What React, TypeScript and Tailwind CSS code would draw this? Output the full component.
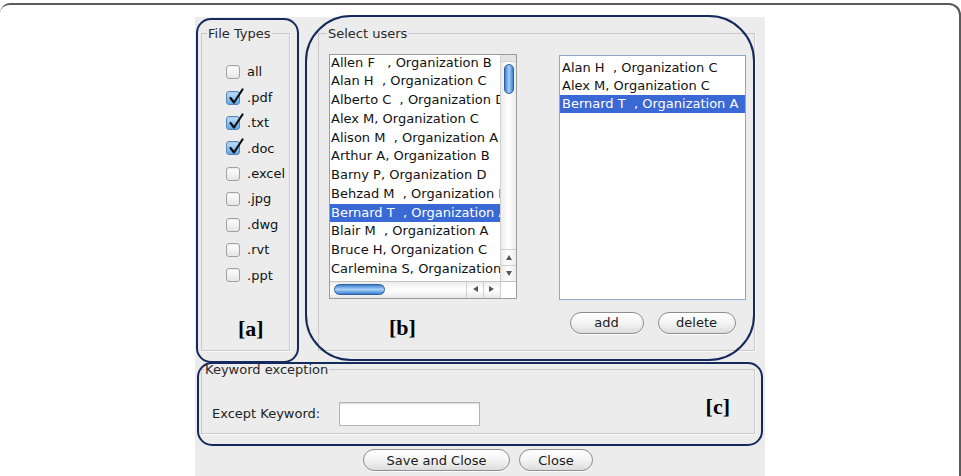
import React from 'react';

const fileTypes = [
  { label: 'all', on: false },
  { label: '.pdf', on: true },
  { label: '.txt', on: true },
  { label: '.doc', on: true },
  { label: '.excel', on: false },
  { label: '.jpg', on: false },
  { label: '.dwg', on: false },
  { label: '.rvt', on: false },
  { label: '.ppt', on: false },
];

const users = [
  'Allen F   , Organization B',
  'Alan H  , Organization C',
  'Alberto C  , Organization D',
  'Alex M, Organization C',
  'Alison M  , Organization A',
  'Arthur A, Organization B',
  'Barny P, Organization D',
  'Behzad M  , Organization D',
  'Bernard T  , Organization A',
  'Blair M  , Organization A',
  'Bruce H, Organization C',
  'Carlemina S, Organization D',
  'Carol K, Organization B',
];

const picked = ['Alan H  , Organization C', 'Alex M, Organization C', 'Bernard T  , Organization A'];

function Check({ on }: { on: boolean }) {
  return (
    <span
      className={
        'relative inline-block w-[14px] h-[14px] rounded-[3px] border shadow-[inset_0_1px_1px_rgba(0,0,0,0.08)] ' +
        (on
          ? 'border-[#5a86b6] bg-gradient-to-b from-[#bfe0fb] to-[#5ea9e8]'
          : 'border-[#a2a2a2] bg-gradient-to-b from-white to-[#e6e6e6]')
      }
    >
      {on && (
        <svg className="absolute left-[1px] -top-[4px]" width="16" height="17" viewBox="0 0 16 17">
          <path d="M2.5 10 L6 14.5 L14.5 1.5" fill="none" stroke="#111" strokeWidth="2.2" strokeLinecap="round" strokeLinejoin="round" />
        </svg>
      )}
    </span>
  );
}

function AquaButton({ children, w }: { children: React.ReactNode; w: string }) {
  return (
    <button
      className={
        w +
        ' h-[22px] rounded-full border border-[#8e8e8e] bg-gradient-to-b from-white via-[#f4f4f4] to-[#dcdcdc] text-[13px] text-[#1a1a1a] leading-none shadow-[0_1px_0_rgba(255,255,255,0.8)]'
      }
    >
      {children}
    </button>
  );
}

function Arrow({ dir }: { dir: 'up' | 'down' | 'left' | 'right' }) {
  const pts = {
    up: '3,1 6,6 0,6',
    down: '0,1 6,1 3,6',
    left: '6,0 6,6 1,3',
    right: '0,0 0,6 5,3',
  }[dir];
  return (
    <svg width="6" height="7" viewBox="0 0 6 7">
      <polygon points={pts} fill="#555" />
    </svg>
  );
}

function UserList() {
  return (
    <div className="w-[188px] h-[245px] border border-[#9c9c9c] bg-white flex flex-col">
      <div className="flex flex-1 min-h-0">
        <div className="flex-1 overflow-hidden">
          <div className="-mt-[1px]">
            {users.map((u, i) => (
              <div
                key={u}
                className={
                  'h-[18.75px] leading-[18.75px] pl-[1px] whitespace-pre overflow-hidden ' +
                  (i === 8 ? 'bg-[#3a68d5] text-white' : 'text-[#111]')
                }
              >
                {u}
              </div>
            ))}
          </div>
        </div>
        {/* vertical scrollbar */}
        <div className="w-[16px] border-l border-[#d0d0d0] bg-gradient-to-r from-[#ececec] via-white to-[#ececec] flex flex-col items-center">
          <div className="w-full h-[7px] bg-[#e4e4e4] border-b border-[#cfcfcf]" />
          <div className="mt-[2px] w-[10px] h-[30px] rounded-full border border-[#2c5f9c] bg-gradient-to-r from-[#3b7fd0] via-[#a9d2f7] to-[#3b7fd0]" />
          <div className="flex-1" />
          <div className="w-full h-[16px] border-t border-[#cfcfcf] flex items-center justify-center">
            <Arrow dir="up" />
          </div>
          <div className="w-full h-[16px] border-t border-[#cfcfcf] flex items-center justify-center">
            <Arrow dir="down" />
          </div>
        </div>
      </div>
      {/* horizontal scrollbar */}
      <div className="h-[17px] flex border-t border-[#c4c4c4]">
        <div className="flex-1 bg-gradient-to-b from-[#ececec] via-white to-[#e8e8e8] flex items-center pl-[4px]">
          <div className="w-[51px] h-[11px] rounded-full border border-[#2c5f9c] bg-gradient-to-b from-[#3b7fd0] via-[#a9d2f7] to-[#3b7fd0]" />
          <div className="flex-1" />
          <div className="w-[17px] h-full border-l border-[#cfcfcf] flex items-center justify-center">
            <Arrow dir="left" />
          </div>
          <div className="w-[17px] h-full border-l border-[#cfcfcf] flex items-center justify-center">
            <Arrow dir="right" />
          </div>
        </div>
        <div className="w-[16px] border-l border-[#cfcfcf] bg-white" />
      </div>
    </div>
  );
}

export default function App() {
  return (
    <div className="w-[961px] h-[476px] bg-white overflow-hidden font-['DejaVu_Sans',sans-serif] text-[13px] text-[#111]">
      <div className="mt-[3px] h-[480px] border-t-2 border-r-2 border-[#5a5a5a] rounded-tr-[12px] rounded-tl-[10px]">
        <div className="relative ml-[195px] mt-[12px] w-[570px] h-[470px] bg-[#ececec] pl-[6px] pr-[10px] pt-[7px]">
          <div className="flex gap-[28px]">
            <fieldset className="w-[89px] h-[327px] border border-[#c9c9c9] shadow-[1px_1px_0_#fafafa]">
              <legend className="ml-[5px] px-[1px] text-[#2a2a2a]">File Types</legend>
              <div className="pl-[24px] pt-[16px]">
                {fileTypes.map((f) => (
                  <div key={f.label} className="h-[25.4px] flex items-center gap-[7px]">
                    <Check on={f.on} />
                    <span>{f.label}</span>
                  </div>
                ))}
              </div>
              <div className="mt-[29px] pl-[36px] font-['Liberation_Serif',serif] font-bold text-[22px] leading-[24px] text-black">
                [a]
              </div>
            </fieldset>

            <fieldset className="w-[437px] h-[327px] border border-[#c9c9c9] shadow-[1px_1px_0_#fafafa]">
              <legend className="ml-[8px] px-[1px] text-[#2a2a2a]">Select users</legend>
              <div className="flex gap-[42px] pl-[10px] pt-[10px]">
                <div className="flex flex-col">
                  <UserList />
                  <div className="mt-[17px] ml-[60px] font-['Liberation_Serif',serif] font-bold text-[22px] leading-[24px] text-black">
                    [b]
                  </div>
                </div>
                <div className="flex flex-col mt-[1px]">
                  <div className="w-[187px] h-[245px] border border-[#8fa6c8] bg-white pt-[3px]">
                    {picked.map((u, i) => (
                      <div
                        key={u}
                        className={
                          'h-[18px] leading-[18px] pl-[2px] whitespace-pre ' +
                          (i === 2 ? 'bg-[#3a68d5] text-white' : 'text-[#111]')
                        }
                      >
                        {u}
                      </div>
                    ))}
                  </div>
                  <div className="mt-[12px] flex justify-center gap-[14px]">
                    <AquaButton w="w-[74px]">add</AquaButton>
                    <AquaButton w="w-[78px]">delete</AquaButton>
                  </div>
                </div>
              </div>
            </fieldset>
          </div>

          <fieldset className="mt-[9px] w-[554px] h-[74px] border border-[#c9c9c9] shadow-[1px_1px_0_#fafafa]">
            <legend className="ml-[2px] px-[1px] text-[#2a2a2a]">Keyword exception</legend>
            <div className="flex items-center pl-[10px] pr-[24px] pt-[22px]">
              <span className="text-[#222]">Except Keyword:</span>
              <input className="ml-[19px] w-[141px] h-[24px] bg-white border border-[#b4b4b4] shadow-[inset_0_1px_1px_rgba(0,0,0,0.15)] outline-none" />
              <span className="ml-auto -mt-[14px] font-['Liberation_Serif',serif] font-bold text-[22px] leading-[24px] text-black">
                [c]
              </span>
            </div>
          </fieldset>

          <div className="mt-[15px] flex justify-center gap-[9px]">
            <AquaButton w="w-[147px]">Save and Close</AquaButton>
            <AquaButton w="w-[74px]">Close</AquaButton>
          </div>

          {/* hand-drawn highlight frames around each section */}
          <div className="pointer-events-none absolute left-[1px] top-[1px] w-[103px] h-[345px] rounded-[15px] border-[2.5px] border-[#14295c]" />
          <div className="pointer-events-none absolute left-[110px] -top-[2px] w-[450px] h-[346px] rounded-[46px] border-[2.5px] border-[#14295c]" />
          <div className="pointer-events-none absolute left-[2px] top-[345px] w-[566px] h-[84px] rounded-[15px] border-[2.5px] border-[#14295c]" />
        </div>
      </div>
    </div>
  );
}
